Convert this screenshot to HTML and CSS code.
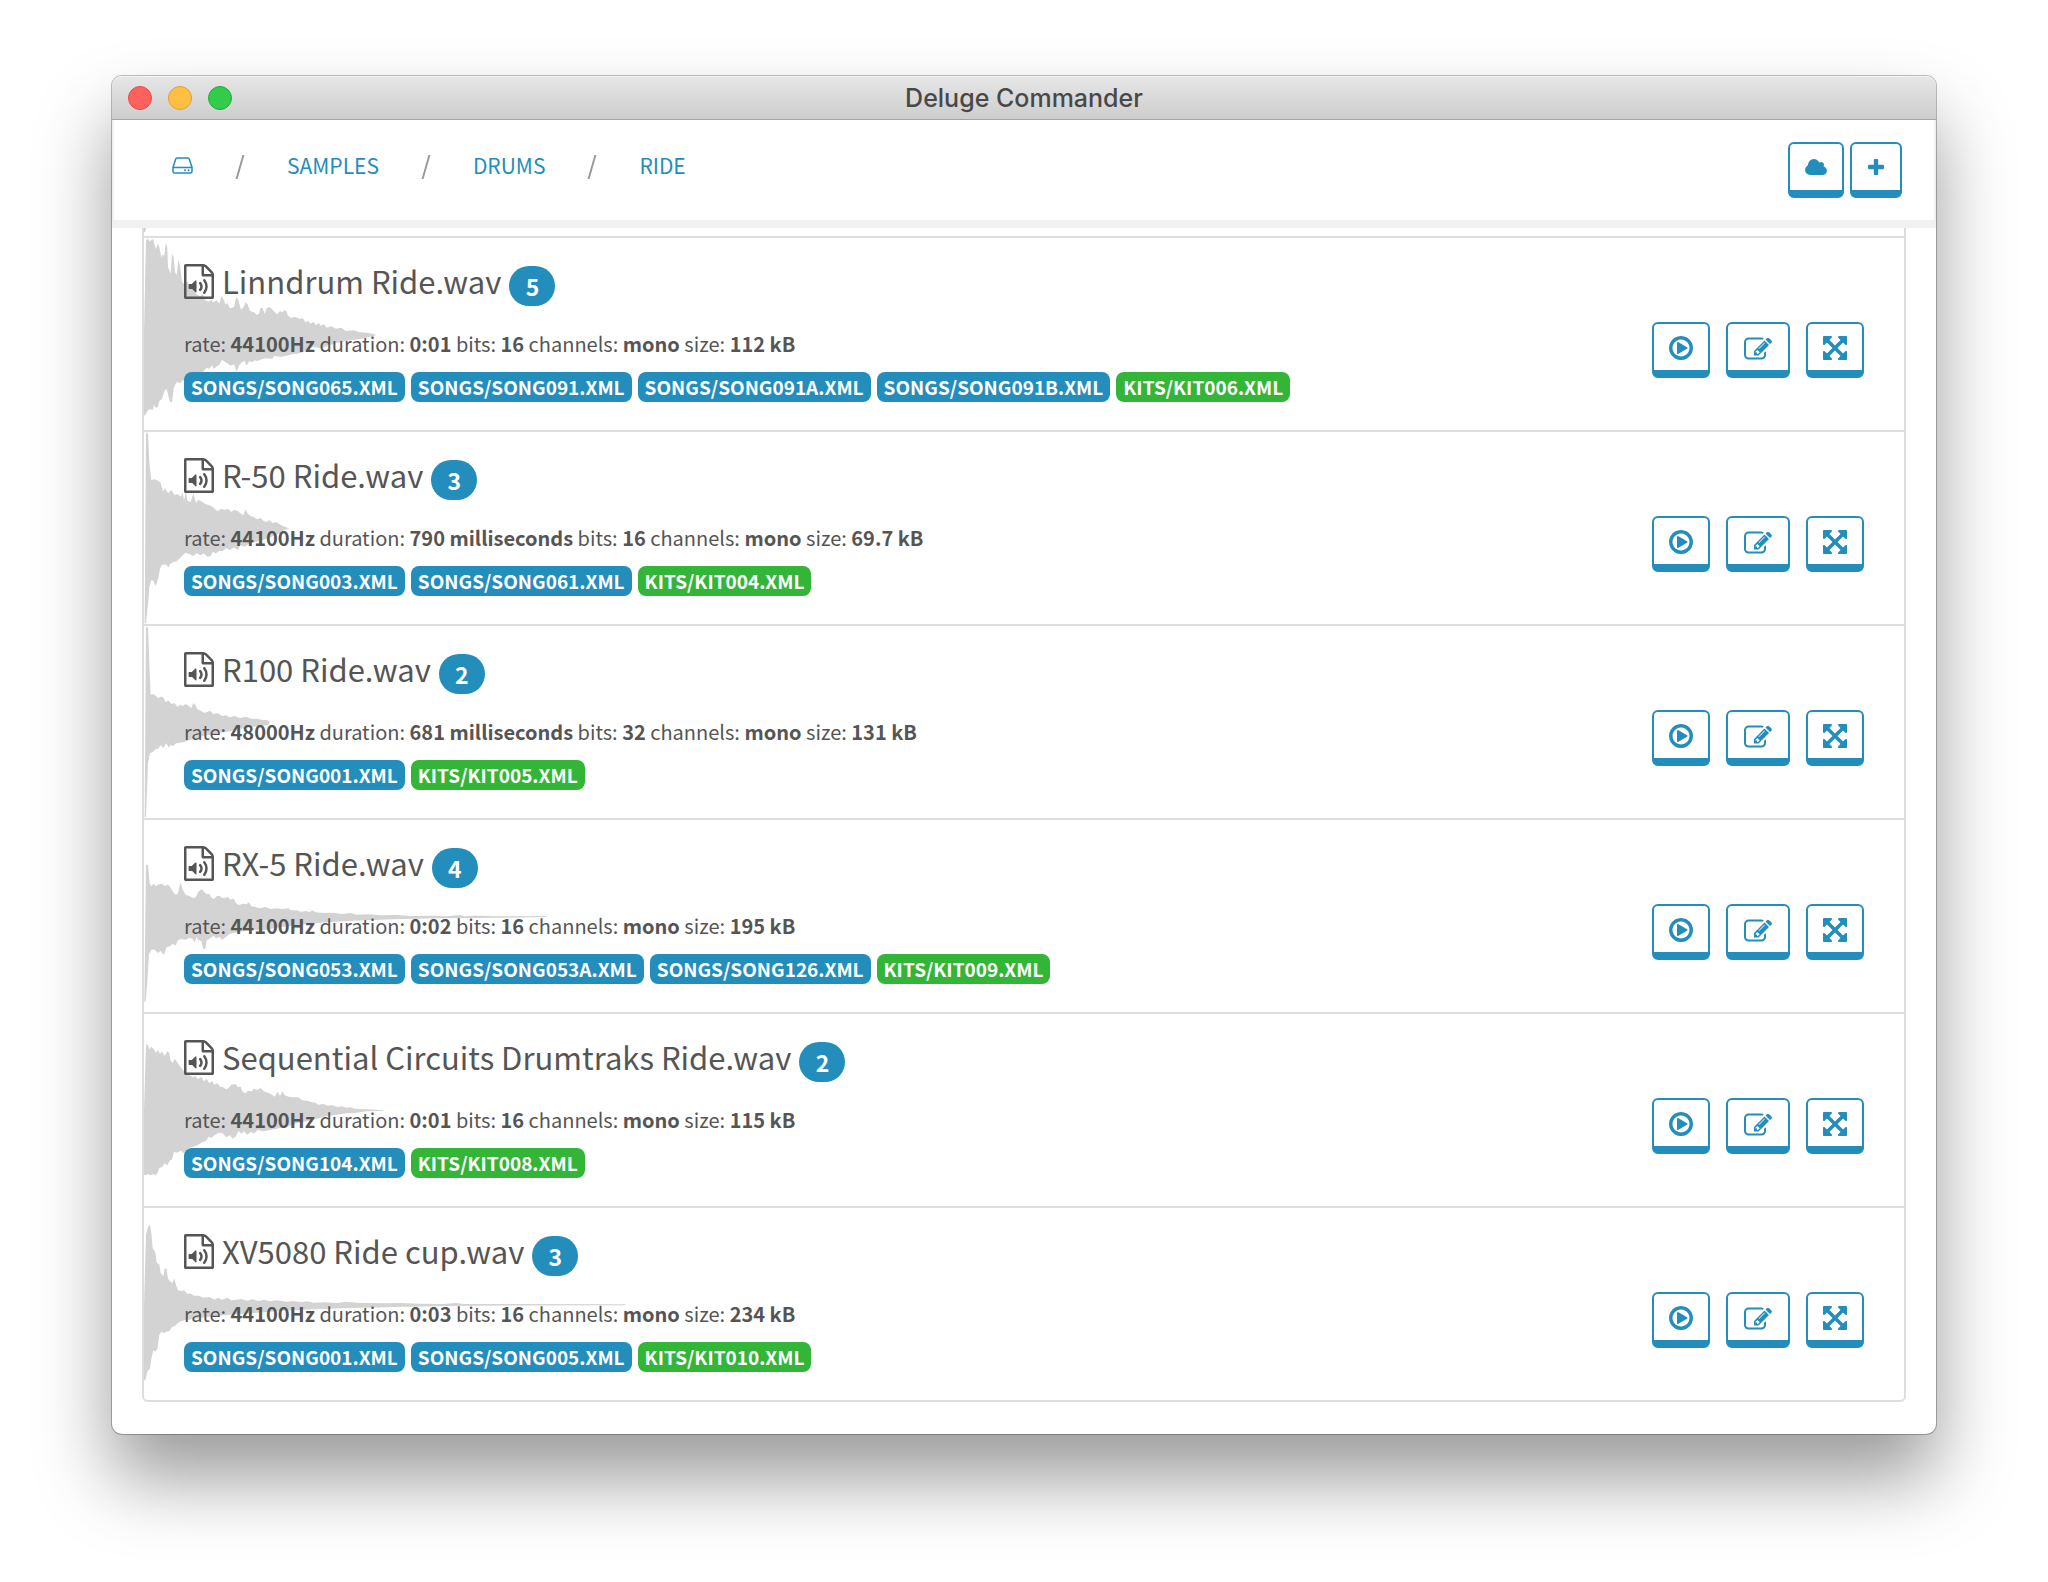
FILE: index.html
```html
<!DOCTYPE html>
<html lang="en">
<head>
    <meta charset="UTF-8">
    <meta name="viewport" content="width=device-width, initial-scale=1.0">
    <title>Deluge Commander</title>
    <link rel="stylesheet" href="styles.css">
</head>
<body>
    <!-- Icon shapes -->
    <svg class="sprite" aria-hidden="true">
        <symbol id="i-disk" viewBox="0 0 21 17">
            <path d="M1 10.500V14.500q0 1.500 1.500 1.500h16q1.500 0 1.500-1.500V10.500zM1 10.500L3.600 2.200Q4 1 5.200 1h10.600q1.200 0 1.600 1.200L20 10.500" fill="none" stroke="currentColor" stroke-width="1.500"/>
            <circle cx="13" cy="13.300" r="1"/><circle cx="16.500" cy="13.300" r="1"/>
        </symbol>
        <symbol id="i-cloud" viewBox="64 128 1920 1408">
            <path d="M1984 1152q0 159-112.500 271.500T1600 1536H512q-185 0-316.500-131.500T64 1088q0-132 71-241.500T322 683q-2-28-2-43 0-212 150-362t362-150q158 0 286.500 88T1306 446q70-62 166-62 106 0 181 75t75 181q0 75-41 138 129 30 213 134.500t84 239.500z"/>
        </symbol>
        <symbol id="i-plus" viewBox="192 128 1408 1408">
            <path d="M1600 736v192q0 40-28 68t-68 28h-416v416q0 40-28 68t-68 28H800q-40 0-68-28t-28-68v-416H288q-40 0-68-28t-28-68V736q0-40 28-68t68-28h416V224q0-40 28-68t68-28h192q40 0 68 28t28 68v416h416q40 0 68 28t28 68z"/>
        </symbol>
        <symbol id="i-audio" viewBox="128 0 1536 1792">
            <path d="M1596 380q28 28 48 76t20 88v1152q0 40-28 68t-68 28H224q-40 0-68-28t-28-68V96q0-40 28-68t68-28h896q40 0 88 20t76 48zm-444-244v376h376q-10-29-22-41l-313-313q-12-12-41-22zm384 1528V640h-416q-40 0-68-28t-28-68V128H256v1536h1280zM748 849q20 8 20 30v544q0 22-20 30-8 2-12 2-12 0-23-9l-166-167H396q-14 0-23-9t-9-23v-192q0-14 9-23t23-9h131l166-167q16-15 35-7zm417 689q31 0 50-24 129-159 129-363t-129-363q-16-21-43-24t-47 14q-21 17-23.500 43.500t14.500 47.500q100 123 100 282t-100 282q-17 21-14.500 47.500t23.500 42.500q18 15 40 15zm-211-148q27 0 47-20 87-93 87-219t-87-219q-18-19-45-20t-46 17-20 44.500 18 46.500q52 57 52 131t-52 131q-19 20-18 46.500t20 44.500q20 17 44 17z"/>
        </symbol>
        <symbol id="i-play" viewBox="128 128 1536 1536">
            <path d="M1312 896q0 37-32 55l-544 320q-15 9-32 9-16 0-32-8-32-19-32-56V576q0-37 32-56 33-18 64 1l544 320q32 18 32 55zm128 0q0-148-73-273t-198-198-273-73-273 73-198 198-73 273 73 273 198 198 273 73 273-73 198-198 73-273zm224 0q0 209-103 385.500t-279.500 279.500-385.500 103-385.500-103-279.500-279.500-103-385.500 103-385.500 279.500-279.500 385.500-103 385.500 103 279.500 279.500 103 385.500z"/>
        </symbol>
        <symbol id="i-edit" viewBox="0 100 1792 1456">
            <path d="M888 1184l116-116-152-152-116 116v56h96v96h56zm440-720q-16-16-33 1L945 815q-17 17-1 33t33-1l350-350q17-17 1-33zm80 594v190q0 119-84.500 203.500T1120 1536H288q-119 0-203.500-84.500T0 1248V416q0-119 84.500-203.500T288 128h832q63 0 117 25 15 7 18 23 3 17-9 29l-49 49q-14 14-32 8-23-6-45-6H288q-66 0-113 47t-47 113v832q0 66 47 113t113 47h832q66 0 113-47t47-113v-126q0-13 9-22l64-64q15-15 35-7t20 29zm-96-738l288 288-672 672H640V992zm444 132l-92 92-288-288 92-92q28-28 68-28t68 28l152 152q28 28 28 68t-28 68z"/>
        </symbol>
        <symbol id="i-expand" viewBox="128 128 1536 1536">
            <path d="M1411 541l-355 355 355 355 144-144q29-31 70-14 39 17 39 59v448q0 26-19 45t-45 19h-448q-42 0-59-40-17-39 14-69l144-144-355-355-355 355 144 144q31 30 14 69-17 40-59 40H192q-26 0-45-19t-19-45v-448q0-42 40-59 39-17 69 14l144 144 355-355-355-355-144 144q-19 19-45 19-12 0-24-5-40-17-40-59V192q0-26 19-45t45-19h448q42 0 59 40 17 39-14 69L541 381l355 355 355-355-144-144q-31-30-14-69 17-40 59-40h448q26 0 45 19t19 45v448q0 42-39 59-13 5-25 5-26 0-45-19z"/>
        </symbol>
    </svg>

    <div class="window">
        <div class="titlebar">
            <div class="lights">
                <span class="light red"></span>
                <span class="light yellow"></span>
                <span class="light green"></span>
            </div>
            <h1>Deluge Commander</h1>
        </div>

        <header class="toolbar">
            <nav class="breadcrumb">
                <a href="#" aria-label="Card"><svg width="21" height="17"><use href="#i-disk"/></svg></a>
                <a href="#">SAMPLES</a>
                <a href="#">DRUMS</a>
                <a href="#">RIDE</a>
            </nav>
            <div class="tools">
                <button type="button" class="btn" aria-label="Sync"><svg width="22" height="16"><use href="#i-cloud"/></svg></button>
                <button type="button" class="btn" aria-label="Add"><svg width="18" height="16"><use href="#i-plus"/></svg></button>
            </div>
        </header>

        <main>
            <ul class="samples">
                <!-- Tail of the row scrolled under the toolbar -->
                <li class="cut"><svg class="wave" viewBox="0 0 1500 24"><path d="M0 0h6v6l-3 6h-3z"/></svg></li>

                <li class="sample">
                    <svg class="wave" viewBox="12 39 1500 576"><path d="M12 320L18 44L26 43L30 50L34 44L40 43L43 56L48 72L53 56L58 66L64 98L68 88L73 92L77 54L82 68L84 126L92 146L96 86L101 96L105 142L110 150L115 104L120 122L126 170L134 180L142 168L150 190L160 186L168 206L180 214L188 208L196 226L206 230L213 224L220 232L230 226L238 236L244 214L250 222L256 238L262 234L270 250L282 246L289 216L295 224L303 254L311 246L316 232L323 238L330 258L342 262L350 270L357 266L361 248L368 250L374 266L380 250L388 246L396 252L404 262L412 268L420 258L428 262L434 254L440 260L444 272L452 278L466 276L480 282L488 279L496 292L504 288L512 296L520 290L528 300L536 294L542 302L552 298L560 308L574 304L588 311L604 308L618 318L640 316L660 322L680 323L700 327L710 330L690 336L660 342L630 346L600 352L570 360L546 370L520 366L500 372L490 382L470 386L456 388L440 392L420 396L404 392L396 402L382 400L366 402L352 408L344 406L336 412L328 408L320 422L314 408L306 412L298 420L290 440L282 418L272 422L264 416L254 410L246 404L238 420L230 424L222 432L216 420L208 432L200 428L188 442L176 446L166 450L156 448L146 456L134 468L128 466L120 474L110 472L102 486L96 530L90 532L86 516L80 492L74 496L66 522L58 528L54 546L48 548L42 540L38 556L30 552L22 558L16 570L12 572z"/></svg>
                    <div class="details">
                        <h2><svg width="30" height="35"><use href="#i-audio"/></svg><span class="name">Linndrum Ride.wav</span><span class="badge">5</span></h2>
                        <p>rate: <b>44100Hz</b> duration: <b>0:01</b> bits: <b>16</b> channels: <b>mono</b> size: <b>112 kB</b></p>
                        <div class="tags">
                            <a href="#" class="tag">SONGS/SONG065.XML</a>
                            <a href="#" class="tag">SONGS/SONG091.XML</a>
                            <a href="#" class="tag">SONGS/SONG091A.XML</a>
                            <a href="#" class="tag">SONGS/SONG091B.XML</a>
                            <a href="#" class="tag kit">KITS/KIT006.XML</a>
                        </div>
                    </div>
                    <div class="actions">
                        <button type="button" class="btn" aria-label="Play"><svg width="24" height="24"><use href="#i-play"/></svg></button>
                        <button type="button" class="btn wide" aria-label="Edit"><svg width="28" height="23"><use href="#i-edit"/></svg></button>
                        <button type="button" class="btn" aria-label="Expand"><svg width="24" height="24"><use href="#i-expand"/></svg></button>
                    </div>
                </li>

                <li class="sample">
                    <svg class="wave" viewBox="12 6 1500 576"><path d="M14 580L18 10H24L28 100L34 150L44 148L54 152L62 158L68 184L76 176L84 190L94 180L104 196L112 192L122 200L128 190L132 210L138 184L142 212L152 216L160 190L168 220L174 210L184 214L196 222L208 226L218 230L226 238L232 244L244 236L254 240L264 236L274 246L282 240L292 242L304 252L310 256L317 238L322 250L332 258L342 262L352 268L362 264L370 272L380 276L388 270L398 280L408 276L418 282L428 288L438 292L447 296L432 300L420 310L400 318L380 326L360 332L330 340L314 350L300 346L294 360L282 352L270 360L258 354L248 364L238 362L228 370L218 366L212 378L202 380L192 370L182 376L170 370L160 378L148 372L136 368L128 376L118 386L110 394L100 396L90 402L86 412L78 404L66 404L60 416L56 440L50 460L46 468L40 452L34 450L28 470L26 500L18 580z"/></svg>
                    <div class="details">
                        <h2><svg width="30" height="35"><use href="#i-audio"/></svg><span class="name">R-50 Ride.wav</span><span class="badge">3</span></h2>
                        <p>rate: <b>44100Hz</b> duration: <b>790 milliseconds</b> bits: <b>16</b> channels: <b>mono</b> size: <b>69.7 kB</b></p>
                        <div class="tags">
                            <a href="#" class="tag">SONGS/SONG003.XML</a>
                            <a href="#" class="tag">SONGS/SONG061.XML</a>
                            <a href="#" class="tag kit">KITS/KIT004.XML</a>
                        </div>
                    </div>
                    <div class="actions">
                        <button type="button" class="btn" aria-label="Play"><svg width="24" height="24"><use href="#i-play"/></svg></button>
                        <button type="button" class="btn wide" aria-label="Edit"><svg width="28" height="23"><use href="#i-edit"/></svg></button>
                        <button type="button" class="btn" aria-label="Expand"><svg width="24" height="24"><use href="#i-expand"/></svg></button>
                    </div>
                </li>

                <li class="sample">
                    <svg class="wave" viewBox="12 588 1500 576"><path d="M14 1162L18 592H24L28 700L32 794L40 792L48 798L54 804L62 800L70 802L76 816L86 812L94 822L104 820L112 830L122 824L130 828L136 822L146 828L154 834L160 820L166 824L172 838L182 842L192 848L202 846L210 842L220 852L234 850L246 858L258 856L268 862L284 858L300 864L318 860L334 866L350 866L368 870L380 870L390 876L384 886L360 888L330 892L300 896L270 904L240 908L210 914L190 918L170 924L150 930L132 936L120 938L108 940L100 948L92 946L86 952L78 940L70 954L62 946L54 956L46 958L38 966L30 970L24 1000L18 1162z"/></svg>
                    <div class="details">
                        <h2><svg width="30" height="35"><use href="#i-audio"/></svg><span class="name">R100 Ride.wav</span><span class="badge">2</span></h2>
                        <p>rate: <b>48000Hz</b> duration: <b>681 milliseconds</b> bits: <b>32</b> channels: <b>mono</b> size: <b>131 kB</b></p>
                        <div class="tags">
                            <a href="#" class="tag">SONGS/SONG001.XML</a>
                            <a href="#" class="tag kit">KITS/KIT005.XML</a>
                        </div>
                    </div>
                    <div class="actions">
                        <button type="button" class="btn" aria-label="Play"><svg width="24" height="24"><use href="#i-play"/></svg></button>
                        <button type="button" class="btn wide" aria-label="Edit"><svg width="28" height="23"><use href="#i-edit"/></svg></button>
                        <button type="button" class="btn" aria-label="Expand"><svg width="24" height="24"><use href="#i-expand"/></svg></button>
                    </div>
                </li>

                <li class="sample">
                    <svg class="wave" viewBox="12 15 1500 576"><path d="M13 560L18 150H24L29 205L34 214L40 206L48 214L56 208L66 206L76 214L84 208L92 218L100 232L108 240L114 234L122 202L128 224L138 240L150 244L160 250L168 246L174 232L184 222L192 230L200 238L208 236L214 248L222 252L232 242L240 244L248 250L256 248L264 246L272 254L280 250L288 264L296 270L310 266L320 268L326 262L334 274L346 276L360 280L376 276L392 282L410 280L428 282L446 280L452 286L470 286L482 290L500 288L508 292L516 286L528 292L550 294L580 293L604 297L632 294L650 299L690 298L720 301L770 300L810 303L880 302L920 304L960 300L975 304L1010 302L1060 304L1218 303L1219 306L1100 308L900 310L760 313L640 317L560 322L500 328L440 334L400 340L370 346L340 344L300 350L270 356L258 366L246 374L238 366L228 370L220 362L208 372L200 376L196 402L190 402L184 378L174 374L170 366L164 382L158 372L150 368L136 374L124 372L114 376L106 392L98 386L90 394L80 396L72 420L62 408L54 414L44 404L34 404L27 418L22 500L17 560z"/></svg>
                    <div class="details">
                        <h2><svg width="30" height="35"><use href="#i-audio"/></svg><span class="name">RX-5 Ride.wav</span><span class="badge">4</span></h2>
                        <p>rate: <b>44100Hz</b> duration: <b>0:02</b> bits: <b>16</b> channels: <b>mono</b> size: <b>195 kB</b></p>
                        <div class="tags">
                            <a href="#" class="tag">SONGS/SONG053.XML</a>
                            <a href="#" class="tag">SONGS/SONG053A.XML</a>
                            <a href="#" class="tag">SONGS/SONG126.XML</a>
                            <a href="#" class="tag kit">KITS/KIT009.XML</a>
                        </div>
                    </div>
                    <div class="actions">
                        <button type="button" class="btn" aria-label="Play"><svg width="24" height="24"><use href="#i-play"/></svg></button>
                        <button type="button" class="btn wide" aria-label="Edit"><svg width="28" height="23"><use href="#i-edit"/></svg></button>
                        <button type="button" class="btn" aria-label="Expand"><svg width="24" height="24"><use href="#i-expand"/></svg></button>
                    </div>
                </li>

                <li class="sample">
                    <svg class="wave" viewBox="12 12 1500 576"><path d="M12 300L18 102L24 106L28 118L34 110L42 118L48 128L54 120L60 132L66 124L74 138L82 124L88 130L92 152L98 158L104 146L114 160L122 172L130 182L138 190L148 196L158 202L166 198L174 208L184 200L192 214L200 206L208 220L216 212L222 224L232 220L240 230L250 232L258 238L266 234L274 224L286 222L294 232L302 230L308 246L316 250L324 242L334 244L342 236L352 240L362 234L372 244L384 248L396 254L404 260L412 246L420 258L428 244L434 256L446 260L460 262L474 262L486 270L500 272L514 276L526 278L536 284L550 282L562 287L578 286L592 291L606 289L618 293L632 292L644 296L680 298L728 301L728 303L680 304L650 308L620 310L590 314L560 318L530 326L500 334L470 340L440 350L410 356L390 360L370 364L352 360L344 370L332 366L322 374L312 364L304 372L296 362L288 378L278 386L270 376L258 382L248 370L236 368L224 376L214 384L206 380L198 392L184 398L172 406L158 410L146 414L132 430L122 422L112 428L102 426L96 448L88 454L82 466L74 460L68 470L58 474L54 486L48 496L40 492L32 496L24 492L18 496L12 494z"/></svg>
                    <div class="details">
                        <h2><svg width="30" height="35"><use href="#i-audio"/></svg><span class="name">Sequential Circuits Drumtraks Ride.wav</span><span class="badge">2</span></h2>
                        <p>rate: <b>44100Hz</b> duration: <b>0:01</b> bits: <b>16</b> channels: <b>mono</b> size: <b>115 kB</b></p>
                        <div class="tags">
                            <a href="#" class="tag">SONGS/SONG104.XML</a>
                            <a href="#" class="tag kit">KITS/KIT008.XML</a>
                        </div>
                    </div>
                    <div class="actions">
                        <button type="button" class="btn" aria-label="Play"><svg width="24" height="24"><use href="#i-play"/></svg></button>
                        <button type="button" class="btn wide" aria-label="Edit"><svg width="28" height="23"><use href="#i-edit"/></svg></button>
                        <button type="button" class="btn" aria-label="Expand"><svg width="24" height="24"><use href="#i-expand"/></svg></button>
                    </div>
                </li>

                <li class="sample">
                    <svg class="wave" viewBox="12 9 1500 576"><path d="M12 300L18 90L24 66L30 60L34 84L38 130L46 142L50 174L58 178L62 204L70 214L74 190L80 192L84 222L92 230L98 234L103 220L108 240L114 256L124 258L132 256L142 266L154 266L162 272L176 272L190 278L208 276L224 284L234 278L246 284L262 278L274 286L290 284L304 282L322 287L338 283L356 288L372 284L390 289L410 286L440 290L460 288L484 292L500 289L520 293L550 292L590 294L618 290L650 293L690 294L730 295L780 294L840 296L910 297L948 294L970 297L1456 298L1456 301L1000 302L800 305L640 309L520 313L420 318L340 324L260 330L200 336L160 342L132 346L116 352L104 364L96 366L88 378L80 380L70 384L64 380L58 390L52 432L46 440L40 436L34 462L30 490L22 500L16 526L12 526z"/></svg>
                    <div class="details">
                        <h2><svg width="30" height="35"><use href="#i-audio"/></svg><span class="name">XV5080 Ride cup.wav</span><span class="badge">3</span></h2>
                        <p>rate: <b>44100Hz</b> duration: <b>0:03</b> bits: <b>16</b> channels: <b>mono</b> size: <b>234 kB</b></p>
                        <div class="tags">
                            <a href="#" class="tag">SONGS/SONG001.XML</a>
                            <a href="#" class="tag">SONGS/SONG005.XML</a>
                            <a href="#" class="tag kit">KITS/KIT010.XML</a>
                        </div>
                    </div>
                    <div class="actions">
                        <button type="button" class="btn" aria-label="Play"><svg width="24" height="24"><use href="#i-play"/></svg></button>
                        <button type="button" class="btn wide" aria-label="Edit"><svg width="28" height="23"><use href="#i-edit"/></svg></button>
                        <button type="button" class="btn" aria-label="Expand"><svg width="24" height="24"><use href="#i-expand"/></svg></button>
                    </div>
                </li>
            </ul>
        </main>
    </div>
</body>
</html>
```
FILE: styles.css
```css
* {
    box-sizing: border-box;
}

body {
    margin: 0;
    padding: 76px 112px 148px;
    background-color: white;
    color: #555;
    font-family: "Noto Sans CJK SC", "Noto Sans", sans-serif;
    font-size: 20px;
}

a {
    color: #238dbb;
    text-decoration: none;
}

svg {
    display: block;
    fill: currentColor;
}

.sprite {
    position: absolute;
    width: 0;
    height: 0;
}

/* Window frame */
.window {
    background-color: white;
    border-radius: 10px;
    box-shadow: 0 0 0 1px rgba(0, 0, 0, 0.25), 0 44px 76px rgba(0, 0, 0, 0.4);
}

.titlebar {
    display: grid;
    grid-template-columns: 1fr auto 1fr;
    align-items: center;
    height: 44px;
    padding: 0 16px;
    background: linear-gradient(#e6e6e6, #cdcdcd);
    border-top: 1px solid #f4f4f4;
    border-bottom: 1px solid #a3a3a3;
    border-radius: 10px 10px 0 0;
}

.titlebar h1 {
    margin: 0;
    color: #484848;
    font-family: Inter, sans-serif;
    font-size: 25px;
    font-weight: 500;
    line-height: 40px;
}

.lights {
    display: flex;
    gap: 16px;
}

.light {
    width: 24px;
    height: 24px;
    border: 1px solid;
    border-radius: 50%;
}

.red {
    background-color: #ff625c;
    border-color: #e24b46;
}

.yellow {
    background-color: #ffbf42;
    border-color: #e0a030;
}

.green {
    background-color: #33cb4b;
    border-color: #24ab38;
}

/* Toolbar */
.toolbar {
    display: flex;
    justify-content: space-between;
    padding: 22px 32px;
    border: 2px solid #f1f1f1;
    border-top: none;
    border-bottom-width: 8px;
}

.breadcrumb {
    display: flex;
    padding-left: 26px;
}

.breadcrumb a {
    display: flex;
    align-items: center;
    height: 46px;
    font-size: 21px;
}

.breadcrumb a + a::before {
    content: "";
    width: 2px;
    height: 24px;
    margin: 4px 46px 0;
    background-color: #999;
    transform: skewX(-16deg);
}

.tools {
    display: flex;
    gap: 6px;
}

/* Buttons */
.btn {
    display: flex;
    align-items: center;
    justify-content: center;
    height: 56px;
    padding: 0 15px;
    background-color: white;
    color: #238dbb;
    border: 2px solid #238dbb;
    border-bottom-width: 8px;
    border-radius: 6px;
    cursor: pointer;
}

.btn:hover {
    background-color: #eef7fb;
}

/* Sample list */
main {
    padding: 0 30px 32px;
}

.samples {
    margin: 0;
    padding: 0;
    list-style: none;
    border: 2px solid #ddd;
    border-top: none;
    border-radius: 0 0 6px 6px;
}

.cut {
    position: relative;
    height: 8px;
}

.sample {
    position: relative;
    display: flex;
    justify-content: space-between;
    padding: 24px 40px 28px;
    border-top: 2px solid #ddd;
}

.wave {
    position: absolute;
    top: 0;
    left: 0;
    width: 500px;
    fill: #d3d3d3;
}

.details {
    position: relative;
}

.sample h2 {
    display: flex;
    align-items: center;
    height: 48px;
    margin: 0;
    font-size: 31px;
    font-weight: 400;
    line-height: 48px;
}

.sample h2 svg {
    margin: 0 8px 10px 0;
}

.name {
    margin-bottom: 10px;
}

.badge {
    min-width: 46px;
    margin-left: 8px;
    background-color: #238dbb;
    color: white;
    border-radius: 20px;
    font-size: 23px;
    font-weight: 700;
    line-height: 40px;
    text-align: center;
}

.sample p {
    margin: 20px 0 14px;
    line-height: 28px;
}

.tags {
    display: flex;
    gap: 6px;
}

.tag {
    padding: 0 7px;
    background-color: #238dbb;
    color: white;
    border-radius: 8px;
    font-size: 19px;
    font-weight: 700;
    line-height: 30px;
}

.kit {
    background-color: #33b538;
}

.actions {
    display: flex;
    align-items: flex-start;
    gap: 16px;
    padding-top: 60px;
}

.actions .btn {
    padding-top: 2px;
}

.wide {
    padding: 0 16px;
}
```
